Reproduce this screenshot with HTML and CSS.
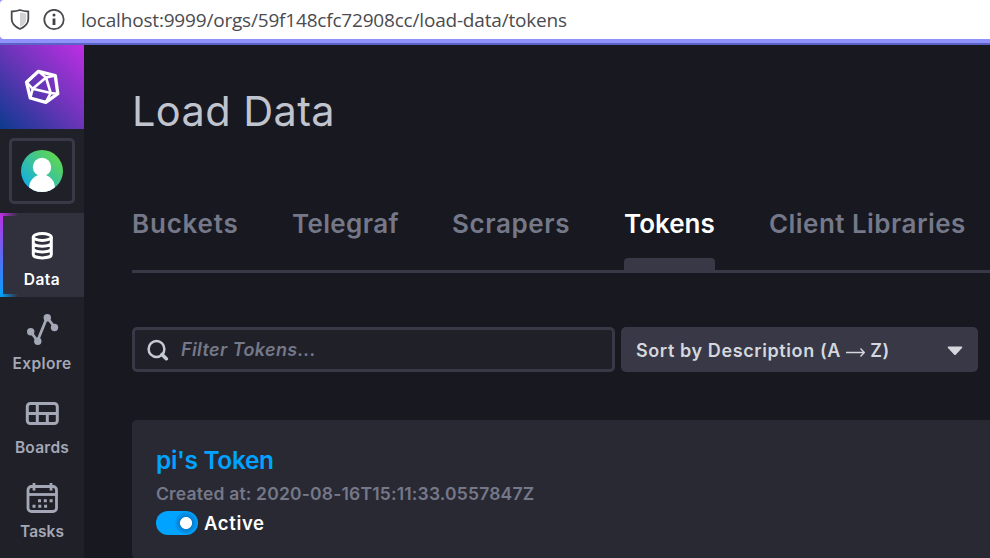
FILE: index.html
```html
<!DOCTYPE html>
<html lang="en">
<head>
<meta charset="utf-8">
<title>Load Data</title>
<link rel="stylesheet" href="styles.css">
</head>
<body>
<header class="browser">
  <div class="address">
    <svg class="shield" width="20" height="22" viewBox="0 0 20 22"><path d="M10 1C7.500 2 4.500 2.400 1.700 2.500V10C1.700 15 5.500 18 10 20C14.500 18 18.300 15 18.300 10V2.500C15.500 2.400 12.500 2 10 1Z" fill="#fff" stroke="#4a4a4f" stroke-width="1.800"/><path d="M10 3.500V18C13.500 16.400 16.200 14 16.200 10V4.400C14 4.300 12 4 10 3.500Z" fill="#d2d2d4"/></svg>
    <svg class="info" width="22" height="22" viewBox="0 0 22 22"><circle cx="11" cy="10.500" r="9.700" fill="none" stroke="#4a4a4f" stroke-width="1.800"/><circle cx="11" cy="6" r="1.500" fill="#3f3f44"/><path d="M11 9.500V16" stroke="#3f3f44" stroke-width="2.800"/></svg>
    <span class="url">localhost:9999/orgs/59f148cfc72908cc/load-data/tokens</span>
  </div>
</header>
<div class="app">
  <nav class="sidebar">
    <div class="logo">
      <svg width="36" height="36" viewBox="0 0 36 36" fill="none" stroke="#fff" stroke-width="3.300" stroke-linejoin="round"><path d="M14.500 2.300L31.300 6.500L33.800 24.700L21.800 33.400L6.300 29L2.500 13.200Z"/><path d="M2.500 13.200L14.500 2.300M22 8.500L31.300 6.500M22 8.500L14.500 2.300M22 8.500L26.700 24L33.800 24.700M26.700 24L21.800 33.400M26.700 24L8.700 19.800L6.300 29M8.700 19.800L22 8.500M8.700 19.800L2.500 13.200" stroke-width="2.600"/></svg>
    </div>
    <div class="user">
      <svg width="42" height="42" viewBox="0 0 42 42"><defs><linearGradient id="av" x1="0" y1="1" x2="1" y2="0"><stop offset="0.120" stop-color="#12afe3"/><stop offset="0.880" stop-color="#62d750"/></linearGradient><clipPath id="round"><circle cx="21" cy="21" r="21"/></clipPath></defs><circle cx="21" cy="21" r="21" fill="url(#av)"/><g clip-path="url(#round)" fill="#fff"><circle cx="21" cy="17" r="9.200"/><ellipse cx="21" cy="38" rx="13" ry="13.500"/></g></svg>
    </div>
    <a class="item active"><svg width="36" height="36" viewBox="0 0 36 36" fill="none" stroke="#fff" stroke-width="3"><ellipse cx="18.300" cy="9" rx="9" ry="3.500"/><path d="M9.300 9V26.500C9.300 31 27.300 31 27.300 26.500V9M9.300 14.800C9.300 19.300 27.300 19.300 27.300 14.800M9.300 20.600C9.300 25.100 27.300 25.100 27.300 20.600"/></svg><span class="t-data">Data</span></a>
    <a class="item"><svg width="36" height="36" viewBox="0 0 36 36" fill="#a4a8b6"><path d="M6.500 19.500L13.500 29L23 5.500L30.500 15" fill="none" stroke="#a4a8b6" stroke-width="2.800"/><circle cx="6.700" cy="19.700" r="3.700"/><circle cx="13.800" cy="29.300" r="3.700"/><circle cx="23.300" cy="5.700" r="3.700"/><circle cx="30.500" cy="15.500" r="3.700"/></svg><span class="t-explore">Explore</span></a>
    <a class="item"><svg width="36" height="36" viewBox="0 0 36 36" fill="none" stroke="#a4a8b6" stroke-width="3"><rect x="3.300" y="7.500" width="30" height="20" rx="3"/><path d="M3.300 17.500H33.300M13.300 7.500V17.500M13.300 17.500V28M23.300 17.500V28"/></svg><span class="t-boards">Boards</span></a>
    <a class="item"><svg width="36" height="36" viewBox="0 0 36 36" fill="none" stroke="#a4a8b6" stroke-width="2.800"><rect x="4" y="6.500" width="28.500" height="25" rx="3.500"/><path d="M4 14.500H32.500"/><path d="M10 3V10.500M27 3V10.500"/><path d="M14 20.800H29.500M8.500 26.300H23.500" stroke-width="3" stroke-dasharray="3 2.800"/></svg><span class="t-tasks">Tasks</span></a>
  </nav>
  <main class="page">
    <h1>Load Data</h1>
    <div class="tabs">
      <a class="tab t-buckets">Buckets</a>
      <a class="tab t-telegraf">Telegraf</a>
      <a class="tab t-scrapers">Scrapers</a>
      <a class="tab t-tokens current">Tokens</a>
      <a class="tab t-client">Client Libraries</a>
    </div>
    <div class="controls">
      <div class="filter"><svg width="22" height="22" viewBox="0 0 22 22" fill="none" stroke="#c6cad3"><circle cx="9.500" cy="10" r="7.900" stroke-width="2.500"/><path d="M15 15.500L19.300 19.700" stroke-width="3.600" stroke-linecap="round"/></svg><span>Filter Tokens...</span></div>
      <div class="sort"><span>Sort by Description (A <svg class="arrow" width="19" height="12" viewBox="0 0 19 12" fill="none" stroke="#d4d7dd" stroke-width="1.300"><path d="M0 6.500H18M14.500 2.500L18.300 6.500L14.500 10.500"/></svg> Z)</span><svg width="16" height="10" viewBox="0 0 16 10"><path d="M1.500 .5H14.500Q16 .5 15 2L9 8.500Q8 9.500 7 8.500L1 2Q0 .5 1.500 .5Z" fill="#d4d7dd"/></svg></div>
    </div>
    <section class="card">
      <div class="name">pi's Token</div>
      <div class="created">Created at: 2020-08-16T15:11:33.0557847Z</div>
      <div class="status"><i class="toggle"></i><span>Active</span></div>
    </section>
  </main>
</div>
</body>
</html>
```
FILE: styles.css
```css
* { box-sizing: border-box; }
body { margin: 0; height: 558px; overflow: hidden; background: #181820; font-family: Inter, sans-serif; font-weight: 600; }
.browser { height: 45px; background: #9092fb; border-bottom: 2px solid #5c61c6; }
.address { height: 39px; background: #fff; border-radius: 4px 0 0 4px; display: flex; align-items: center; padding-left: 10px; }
.info { margin-left: 13px; }
.url { margin-left: 16px; font: 400 19px "Open Sans", sans-serif; letter-spacing: -.19px; color: #4b4b50; white-space: nowrap; }
.app { display: flex; height: 513px; }
.sidebar { width: 84px; flex: none; background: #202028; }
.logo { height: 84px; background: linear-gradient(45deg, #0b3a8d, #6a35b9 50%, #be2ee4); display: flex; align-items: center; justify-content: center; }
.user { width: 66px; height: 66px; margin: 9px; border: 3px solid #383846; border-radius: 5px; display: flex; align-items: center; justify-content: center; }
.item { height: 84px; display: flex; flex-direction: column; align-items: center; padding-top: 15px; color: #a4a8b6; font-size: 15.500px; line-height: 20px; }
.item span { margin-top: 6px; white-space: nowrap; }
.t-data { letter-spacing: .5px; }
.t-explore { letter-spacing: .4px; }
.t-boards { letter-spacing: .25px; }
.active { color: #fff; background: linear-gradient(90deg, #be2ee4, #31313d) 0 0 / 18px 3px no-repeat, linear-gradient(90deg, #00a3ff, #31313d) 0 100% / 18px 3px no-repeat, linear-gradient(#be2ee4, #00a3ff) 0 0 / 3px 100% no-repeat, #31313d; }
.page { flex: 1; min-width: 0; padding: 42px 0 0 48px; }
h1 { margin: 0; font-weight: 400; font-size: 41.500px; line-height: 48px; letter-spacing: .4px; color: #c0c4ce; }
.tabs { margin-top: 51px; height: 87px; border-bottom: 3px solid #383846; display: flex; gap: 54px; font-size: 26px; line-height: 76px; color: #757888; white-space: nowrap; }
.tab { display: flex; flex-direction: column; }
.t-buckets { width: 106px; letter-spacing: .8px; }
.t-telegraf { width: 106px; letter-spacing: .35px; }
.t-scrapers { width: 118px; letter-spacing: .6px; }
.t-tokens { width: 91px; }
.t-client { letter-spacing: .45px; }
.current { color: #fff; }
.current::after { content: ""; height: 12px; margin-top: -4px; background: #383846; border-radius: 4px 4px 0 0; }
.controls { display: flex; gap: 6px; margin-top: 54px; height: 45px; }
.filter { width: 483px; border: 3px solid #383846; border-radius: 5px; background: #202028; display: flex; align-items: center; padding-left: 12px; gap: 12px; color: #757888; font-style: italic; font-size: 18px; letter-spacing: .4px; }
.sort { width: 357px; border-radius: 5px; background: #383846; color: #d4d7dd; font-size: 18px; letter-spacing: .6px; display: flex; align-items: center; justify-content: space-between; padding: 2px 15px 0; }
.arrow { vertical-align: -1px; }
.card { margin-top: 48px; height: 139px; padding: 24px; border-radius: 5px 0 0 5px; background: #292933; }
.name { color: #00a3ff; font-size: 24.500px; line-height: 32px; letter-spacing: -.35px; }
.created { margin-top: 8px; color: #757888; font-size: 17.500px; line-height: 20px; letter-spacing: .18px; }
.status { margin-top: 7px; height: 24px; display: flex; align-items: center; gap: 6px; color: #fff; font-size: 18.500px; line-height: 24px; letter-spacing: .65px; }
.toggle { width: 42px; height: 24px; border-radius: 12px; background: radial-gradient(circle at 30px 12px, #fff 5.600px, #087dce 6.400px, #00a3ff 12px); }
```
